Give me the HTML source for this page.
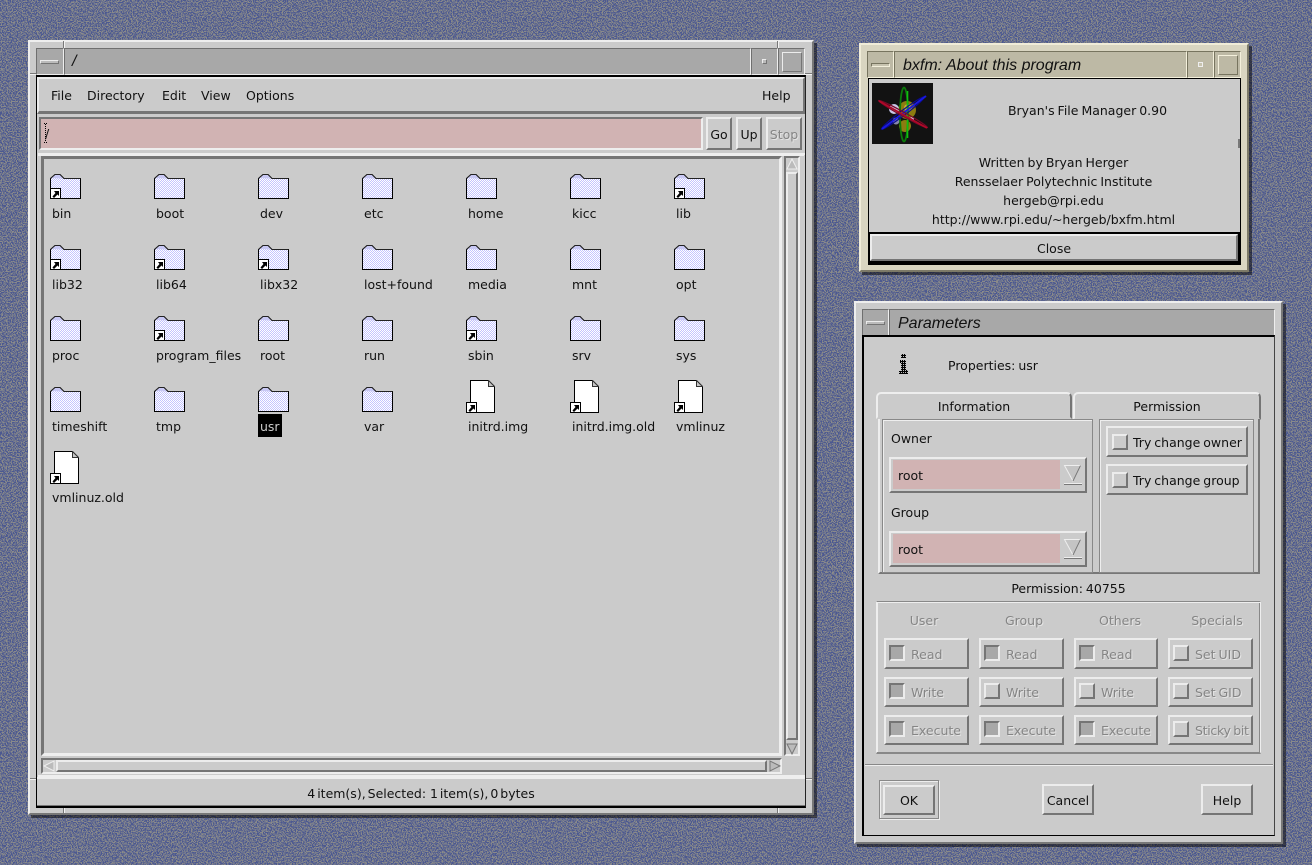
<!DOCTYPE html>
<html><head><meta charset="utf-8"><title>bxfm</title>
<style>
html,body{margin:0;padding:0;width:1312px;height:865px;overflow:hidden;background:#6f7388}
body{position:relative;font:12.5px/16px "DejaVu Sans","Liberation Sans",sans-serif;color:#111;word-spacing:-1px}
div,svg,span.t{position:absolute;box-sizing:border-box}
span.t{white-space:nowrap;margin-top:1px}
.c{text-align:center}
.r{background:#cbcbcb;border:2px solid;border-color:#ececec #757575 #757575 #ececec}
.s{border:2px solid;border-color:#757575 #ececec #ececec #757575}
.wo{background:#cbcbcb;border:2px solid;border-color:#eee #777 #777 #eee;box-shadow:3px 3px 0 rgba(0,0,0,.5)}
.wb{background:#d9d5c1;border:2px solid;border-color:#f0ecd8 #7d7a68 #7d7a68 #f0ecd8;box-shadow:3px 3px 0 rgba(0,0,0,.5)}
.tt{background:#a8a8a8;border:1px solid;border-color:#6f6f6f #eee #eee #6f6f6f}
.tb{background:#bdb9a5;border:1px solid;border-color:#77745f #f4f0dc #f4f0dc #77745f}
.ti{font-family:"Liberation Sans",sans-serif;font-style:italic;font-size:16px;line-height:20px;word-spacing:0}
.k{background:#cbcbcb;border:2px solid;border-color:#ececec #757575 #757575 #ececec;width:16px;height:16px}
.k.n{background:#a8a8a8;border-color:#757575 #ececec #ececec #757575}
.d{color:#858585;text-shadow:1px 1px 0 #e4e4e4}
.l{background:#f2f2f2}
.g{background:#787878}
.sel{background:#000}
</style></head><body>
<svg style="left:0;top:0" width="1312" height="865">
<filter id="nz" x="0" y="0" width="100%" height="100%" color-interpolation-filters="sRGB"><feTurbulence type="fractalNoise" baseFrequency="0.8" numOctaves="2" seed="7"/><feColorMatrix values="0 0 0 0 .30 0 0 0 0 .35 0 0 0 0 .57 1 0 0 0 0"/><feComponentTransfer><feFuncA type="discrete" tableValues="0 0 1 1"/></feComponentTransfer></filter>
<defs>
<pattern id="h" width="2" height="2" patternUnits="userSpaceOnUse"><rect width="2" height="2" fill="#c4c4ff"/><rect width="1" height="1" fill="#fff"/><rect x="1" y="1" width="1" height="1" fill="#fff"/></pattern>
<symbol id="f" viewBox="0 0 31 25"><path d="M.5 4.500 5 .5h5l4 4h16.500v20H.5z" fill="url(#h)" stroke="#000"/><path d="M1 4 5 1h5l3.500 3.500z" fill="#c8c8f4"/><path d="M.5 4.500 5 .5h5l4 4h16.500" fill="none" stroke="#222"/></symbol>
<symbol id="a" viewBox="0 0 11 11"><rect x=".5" y=".5" width="10" height="10" fill="#fff" stroke="#000"/><path d="M4 3h5v5L7.500 6.500 4 10 2.500 8.500l3-3.500z" fill="#000"/></symbol>
<symbol id="p" viewBox="0 0 29 33"><path d="M4.500.5h18l6 6v26h-24z" fill="#fff" stroke="#000"/><path d="M22.500.5v6h6z" fill="#c8c8c8" stroke="#333"/></symbol>
</defs>
<rect width="1312" height="865" fill="#8a8a8a"/>
<rect width="1312" height="865" fill="#4d5a92" filter="url(#nz)"/>
</svg>

<!-- MAIN WINDOW -->
<div class="wo" style="left:28px;top:40px;width:786px;height:775px"></div>
<div class="g" style="left:63px;top:41px;width:1px;height:7px"></div><div class="l" style="left:64px;top:41px;width:1px;height:7px"></div>
<div class="g" style="left:777px;top:41px;width:1px;height:7px"></div><div class="l" style="left:778px;top:41px;width:1px;height:7px"></div>
<div class="g" style="left:30px;top:73px;width:7px;height:1px"></div><div class="l" style="left:30px;top:74px;width:7px;height:1px"></div>
<div class="g" style="left:805px;top:73px;width:7px;height:1px"></div><div class="l" style="left:805px;top:74px;width:7px;height:1px"></div>
<div class="g" style="left:30px;top:778px;width:7px;height:1px"></div><div class="l" style="left:30px;top:779px;width:7px;height:1px"></div>
<div class="g" style="left:805px;top:778px;width:7px;height:1px"></div><div class="l" style="left:805px;top:779px;width:7px;height:1px"></div>
<div class="g" style="left:63px;top:806px;width:1px;height:7px"></div><div class="l" style="left:64px;top:806px;width:1px;height:7px"></div>
<div class="g" style="left:777px;top:806px;width:1px;height:7px"></div><div class="l" style="left:778px;top:806px;width:1px;height:7px"></div>
<div class="tt" style="left:36px;top:48px;width:28px;height:27px"></div>
<div class="k" style="left:40px;top:60px;width:19px;height:4px;border-width:1px;background:#bbb"></div>
<div class="tt" style="left:64px;top:48px;width:687px;height:27px"></div>
<span class="t ti" style="left:72px;top:51px">/</span>
<div class="tt" style="left:751px;top:48px;width:27px;height:27px"></div>
<div class="k" style="left:762px;top:59px;width:5px;height:5px;border-width:1px;background:#bbb"></div>
<div class="tt" style="left:778px;top:48px;width:27px;height:27px"></div>
<div class="k" style="left:782px;top:52px;width:20px;height:20px;border-width:1px;background:#a8a8a8"></div>
<div style="left:36px;top:75px;width:770px;height:733px;border:1px solid;border-color:#000 #222 #000 #000;border-top-width:2px;border-bottom-width:2px;background:#cbcbcb"></div>

<div class="r" style="left:37px;top:77px;width:768px;height:37px;border-bottom-width:3px"></div>
<span class="t" style="left:51px;top:87px">File</span>
<span class="t" style="left:87px;top:87px">Directory</span>
<span class="t" style="left:162px;top:87px">Edit</span>
<span class="t" style="left:201px;top:87px">View</span>
<span class="t" style="left:246px;top:87px">Options</span>
<span class="t" style="left:762px;top:87px">Help</span>

<div class="s" style="left:39px;top:117px;width:664px;height:33px;background:#d1b3b3;border-color:#757575 #eee #eee #757575;border-width:2px"></div>
<span class="t" style="left:45px;top:125px">/</span>
<svg style="left:44px;top:123px" width="3" height="20"><path d="M1.500 1v18" stroke="#000" stroke-dasharray="1 1"/><path d="M0 .5h3M0 19.500h3" stroke="#000" stroke-dasharray="1 1"/></svg>
<div class="r" style="left:706px;top:117px;width:26px;height:33px"></div><span class="t c" style="left:706px;top:126px;width:26px">Go</span>
<div class="r" style="left:736px;top:117px;width:26px;height:33px"></div><span class="t c" style="left:736px;top:126px;width:26px">Up</span>
<div class="r" style="left:766px;top:117px;width:36px;height:33px"></div><span class="t c d" style="left:766px;top:126px;width:36px">Stop</span>

<div style="left:38px;top:153px;width:767px;height:624px;border-top:2px solid #eee;border-bottom:2px solid #eee;background:#cbcbcb"></div>
<div style="left:38px;top:154px;width:766px;height:2px;background:#eee"></div>
<div style="left:41px;top:156px;width:741px;height:600px;border:3px solid;border-color:#757575 #eee #eee #757575"></div>
<!-- v scrollbar -->
<div style="left:784px;top:156px;width:16px;height:600px;border:2px solid;border-color:#757575 #eee #eee #757575"></div>
<svg style="left:786px;top:158px" width="12" height="12"><path d="M6 1 11 11H1z" fill="#bbb" stroke="#eee"/></svg>
<div class="r" style="left:786px;top:172px;width:12px;height:568px"></div>
<svg style="left:786px;top:743px" width="12" height="12"><path d="M6 11 11 1H1z" fill="#bbb" stroke="#777"/></svg>
<!-- h scrollbar -->
<div style="left:41px;top:758px;width:741px;height:16px;border:2px solid;border-color:#757575 #eee #eee #757575"></div>
<svg style="left:43px;top:760px" width="12" height="12"><path d="M1 6 11 1V11z" fill="#bbb" stroke="#eee"/></svg>
<div class="r" style="left:56px;top:760px;width:711px;height:12px"></div>
<svg style="left:769px;top:760px" width="12" height="12"><path d="M11 6 1 1V11z" fill="#bbb" stroke="#777"/></svg>
<div style="left:37px;top:777px;width:768px;height:29px;border-top:2px solid #eee;border-bottom:1px solid #777"></div>
<span class="t c" style="left:37px;top:785px;width:768px;word-spacing:-2px">4 item(s), Selected:&nbsp; 1 item(s), 0 bytes</span>

<!-- Row 1 -->
<svg style="left:50px;top:174px" width="31" height="25"><use href="#f"/></svg><svg style="left:50px;top:188px" width="11" height="11"><use href="#a"/></svg><span class="t" style="left:52px;top:205px">bin</span>
<svg style="left:154px;top:174px" width="31" height="25"><use href="#f"/></svg><span class="t" style="left:156px;top:205px">boot</span>
<svg style="left:258px;top:174px" width="31" height="25"><use href="#f"/></svg><span class="t" style="left:260px;top:205px">dev</span>
<svg style="left:362px;top:174px" width="31" height="25"><use href="#f"/></svg><span class="t" style="left:364px;top:205px">etc</span>
<svg style="left:466px;top:174px" width="31" height="25"><use href="#f"/></svg><span class="t" style="left:468px;top:205px">home</span>
<svg style="left:570px;top:174px" width="31" height="25"><use href="#f"/></svg><span class="t" style="left:572px;top:205px">kicc</span>
<svg style="left:674px;top:174px" width="31" height="25"><use href="#f"/></svg><svg style="left:674px;top:188px" width="11" height="11"><use href="#a"/></svg><span class="t" style="left:676px;top:205px">lib</span>
<!-- Row 2 -->
<svg style="left:50px;top:245px" width="31" height="25"><use href="#f"/></svg><svg style="left:50px;top:259px" width="11" height="11"><use href="#a"/></svg><span class="t" style="left:52px;top:276px">lib32</span>
<svg style="left:154px;top:245px" width="31" height="25"><use href="#f"/></svg><svg style="left:154px;top:259px" width="11" height="11"><use href="#a"/></svg><span class="t" style="left:156px;top:276px">lib64</span>
<svg style="left:258px;top:245px" width="31" height="25"><use href="#f"/></svg><svg style="left:258px;top:259px" width="11" height="11"><use href="#a"/></svg><span class="t" style="left:260px;top:276px">libx32</span>
<svg style="left:362px;top:245px" width="31" height="25"><use href="#f"/></svg><span class="t" style="left:364px;top:276px">lost+found</span>
<svg style="left:466px;top:245px" width="31" height="25"><use href="#f"/></svg><span class="t" style="left:468px;top:276px">media</span>
<svg style="left:570px;top:245px" width="31" height="25"><use href="#f"/></svg><span class="t" style="left:572px;top:276px">mnt</span>
<svg style="left:674px;top:245px" width="31" height="25"><use href="#f"/></svg><span class="t" style="left:676px;top:276px">opt</span>
<!-- Row 3 -->
<svg style="left:50px;top:316px" width="31" height="25"><use href="#f"/></svg><span class="t" style="left:52px;top:347px">proc</span>
<svg style="left:154px;top:316px" width="31" height="25"><use href="#f"/></svg><svg style="left:154px;top:330px" width="11" height="11"><use href="#a"/></svg><span class="t" style="left:156px;top:347px">program_files</span>
<svg style="left:258px;top:316px" width="31" height="25"><use href="#f"/></svg><span class="t" style="left:260px;top:347px">root</span>
<svg style="left:362px;top:316px" width="31" height="25"><use href="#f"/></svg><span class="t" style="left:364px;top:347px">run</span>
<svg style="left:466px;top:316px" width="31" height="25"><use href="#f"/></svg><svg style="left:466px;top:330px" width="11" height="11"><use href="#a"/></svg><span class="t" style="left:468px;top:347px">sbin</span>
<svg style="left:570px;top:316px" width="31" height="25"><use href="#f"/></svg><span class="t" style="left:572px;top:347px">srv</span>
<svg style="left:674px;top:316px" width="31" height="25"><use href="#f"/></svg><span class="t" style="left:676px;top:347px">sys</span>
<!-- Row 4 -->
<svg style="left:50px;top:387px" width="31" height="25"><use href="#f"/></svg><span class="t" style="left:52px;top:418px">timeshift</span>
<svg style="left:154px;top:387px" width="31" height="25"><use href="#f"/></svg><span class="t" style="left:156px;top:418px">tmp</span>
<svg style="left:258px;top:387px" width="31" height="25"><use href="#f"/></svg><div class="sel" style="left:258px;top:414px;width:24px;height:23px"></div><span class="t" style="left:260px;top:418px;color:#ccc">usr</span>
<svg style="left:362px;top:387px" width="31" height="25"><use href="#f"/></svg><span class="t" style="left:364px;top:418px">var</span>
<svg style="left:466px;top:380px" width="29" height="33"><use href="#p"/></svg><svg style="left:466px;top:402px" width="11" height="11"><use href="#a"/></svg><span class="t" style="left:468px;top:418px">initrd.img</span>
<svg style="left:570px;top:380px" width="29" height="33"><use href="#p"/></svg><svg style="left:570px;top:402px" width="11" height="11"><use href="#a"/></svg><span class="t" style="left:572px;top:418px">initrd.img.old</span>
<svg style="left:674px;top:380px" width="29" height="33"><use href="#p"/></svg><svg style="left:674px;top:402px" width="11" height="11"><use href="#a"/></svg><span class="t" style="left:676px;top:418px">vmlinuz</span>
<!-- Row 5 -->
<svg style="left:50px;top:451px" width="29" height="33"><use href="#p"/></svg><svg style="left:50px;top:473px" width="11" height="11"><use href="#a"/></svg><span class="t" style="left:52px;top:489px">vmlinuz.old</span>

<!-- ABOUT WINDOW -->
<div class="wb" style="left:859px;top:43px;width:390px;height:229px"></div>
<div class="tb" style="left:867px;top:51px;width:27px;height:27px"></div>
<div style="left:871px;top:63px;width:19px;height:4px;background:#c8c4b0;border:1px solid;border-color:#77745f #f4f0dc #f4f0dc #77745f"></div>
<div class="tb" style="left:894px;top:51px;width:293px;height:27px"></div>
<span class="t ti" style="left:903px;top:55px">bxfm: About this program</span>
<div class="tb" style="left:1187px;top:51px;width:27px;height:27px"></div>
<div style="left:1198px;top:62px;width:5px;height:5px;background:#c8c4b0;border:1px solid #eee"></div>
<div class="tb" style="left:1214px;top:51px;width:27px;height:27px"></div>
<div style="left:1218px;top:55px;width:20px;height:20px;background:#bdb9a5;border:1px solid;border-color:#f4f0dc #77745f #77745f #f4f0dc"></div>
<div style="left:868px;top:78px;width:373px;height:187px;border:1px solid #000;background:#cbcbcb"></div>
<svg style="left:872px;top:83px" width="61" height="61" viewBox="0 0 61 61">
<rect width="61" height="61" fill="#121212"/>
<circle cx="35" cy="27" r="9" fill="#8c7c10"/><circle cx="33" cy="43" r="6" fill="#8c7c10"/><circle cx="36" cy="25" r="4" fill="#c4b030"/>
<circle cx="22" cy="26" r="5" fill="#c8c8e8"/><circle cx="24" cy="38" r="3.500" fill="#8888aa"/><circle cx="40" cy="36" r="2" fill="#c8c8e8"/>
<ellipse cx="32" cy="31.500" rx="4" ry="27" fill="none" stroke="#0a7a0a" stroke-width="1.800"/>
<path d="M35.500 8V55" stroke="#10c010" stroke-width="1.600"/>
<ellipse cx="31" cy="30" rx="27" ry="2.500" transform="rotate(-37 31 30)" fill="none" stroke="#0a0a90" stroke-width="1.200"/>
<path d="M10 46 54 13" stroke="#1818e0" stroke-width="2"/>
<ellipse cx="31" cy="31" rx="28" ry="2" transform="rotate(29 31 31)" fill="none" stroke="#7a0828" stroke-width="1.200"/>
<path d="M7 18 55 45" stroke="#b00828" stroke-width="1.800"/>
</svg>
<div class="g" style="left:1238px;top:139px;width:2px;height:9px"></div>
<span class="t c" style="left:948px;top:102px;width:279px">Bryan's File Manager 0.90</span>
<span class="t c" style="left:868px;top:154px;width:371px">Written by Bryan Herger</span>
<span class="t c" style="left:868px;top:173px;width:371px">Rensselaer Polytechnic Institute</span>
<span class="t c" style="left:868px;top:192px;width:371px">hergeb@rpi.edu</span>
<span class="t c" style="left:868px;top:211px;width:371px">http://www.rpi.edu/~hergeb/bxfm.html</span>
<div style="left:868px;top:232px;width:373px;height:33px;background:#000"></div>
<div class="r" style="left:870px;top:234px;width:368px;height:27px"></div>
<span class="t c" style="left:870px;top:240px;width:368px">Close</span>

<!-- PARAMETERS WINDOW -->
<div class="wo" style="left:854px;top:301px;width:429px;height:543px"></div>
<div class="tt" style="left:862px;top:309px;width:27px;height:27px"></div>
<div class="k" style="left:866px;top:321px;width:19px;height:4px;border-width:1px;background:#bbb"></div>
<div class="tt" style="left:889px;top:309px;width:386px;height:27px"></div>
<span class="t ti" style="left:898px;top:313px">Parameters</span>
<div style="left:862px;top:335px;width:413px;height:501px;border:1px solid #000;border-top-width:2px;border-left-width:2px;background:#cbcbcb;border-right-color:#444"></div>
<svg style="left:899px;top:354px" width="10" height="21"><defs><pattern id="ck" width="2" height="2" patternUnits="userSpaceOnUse"><rect width="2" height="2" fill="#000"/><rect width="1" height="1" fill="#bbb"/></pattern></defs><path d="M2 0h5v4H2zM1 6h6v10h2v4H0v-3h2V9H1z" fill="url(#ck)"/></svg>
<span class="t" style="left:948px;top:357px">Properties: usr</span>

<!-- Tabs -->
<div style="left:876px;top:392px;width:196px;height:27px;border:2px solid;border-color:#eee #757575 transparent #eee;border-radius:5px 5px 0 0"></div>
<span class="t c" style="left:876px;top:398px;width:196px">Information</span>
<div style="left:1073px;top:392px;width:188px;height:28px;border:2px solid;border-color:#eee #757575 transparent #eee;border-radius:5px 5px 0 0"></div>
<span class="t c" style="left:1073px;top:398px;width:188px">Permission</span>

<div style="left:878px;top:419px;width:382px;height:155px;border-left:2px solid #eee;border-bottom:2px solid #777;border-right:2px solid #777"></div>
<div style="left:882px;top:419px;width:211px;height:154px;border:1px solid #888;box-shadow:inset 1px 1px 0 #eee"></div>
<div style="left:1099px;top:419px;width:155px;height:154px;border:1px solid #888;box-shadow:inset 1px 1px 0 #eee"></div>

<span class="t" style="left:891px;top:430px">Owner</span>
<div class="r" style="left:889px;top:457px;width:198px;height:36px"></div>
<div style="left:893px;top:460px;width:167px;height:29px;background:#d1b3b3"></div>
<span class="t" style="left:898px;top:467px">root</span>
<svg style="left:1063px;top:464px" width="20" height="22"><path d="M1.500 1.500h16L10 17z" fill="#c4c4c4" stroke="#eee"/><path d="M17.500 1.500 10 17" stroke="#777" fill="none"/><path d="M1 19.500h18" stroke="#eee"/><path d="M1 20.500h18" stroke="#777"/></svg>
<span class="t" style="left:891px;top:504px">Group</span>
<div class="r" style="left:889px;top:531px;width:198px;height:36px"></div>
<div style="left:893px;top:534px;width:167px;height:29px;background:#d1b3b3"></div>
<span class="t" style="left:898px;top:541px">root</span>
<svg style="left:1063px;top:538px" width="20" height="22"><path d="M1.500 1.500h16L10 17z" fill="#c4c4c4" stroke="#eee"/><path d="M17.500 1.500 10 17" stroke="#777" fill="none"/><path d="M1 19.500h18" stroke="#eee"/><path d="M1 20.500h18" stroke="#777"/></svg>

<div class="r" style="left:1106px;top:426px;width:142px;height:31px"></div><div class="k" style="left:1112px;top:434px"></div><span class="t" style="left:1133px;top:434px">Try change owner</span>
<div class="r" style="left:1106px;top:464px;width:142px;height:31px"></div><div class="k" style="left:1112px;top:472px"></div><span class="t" style="left:1133px;top:472px">Try change group</span>

<span class="t c" style="left:876px;top:580px;width:385px">Permission: 40755</span>

<div style="left:876px;top:601px;width:385px;height:153px;border:1px solid #888;border-color:#888 #eee #888 #eee;border-bottom-width:2px;box-shadow:inset 1px 1px 0 #eee,inset -1px 0 0 #888"></div>
<span class="t c d" style="left:884px;top:612px;width:80px">User</span>
<span class="t c d" style="left:984px;top:612px;width:80px">Group</span>
<span class="t c d" style="left:1080px;top:612px;width:80px">Others</span>
<span class="t c d" style="left:1177px;top:612px;width:80px">Specials</span>

<div class="r" style="left:884px;top:638px;width:85px;height:31px"></div><div class="k n" style="left:889px;top:645px"></div><span class="t d" style="left:911px;top:646px">Read</span>
<div class="r" style="left:979px;top:638px;width:85px;height:31px"></div><div class="k n" style="left:984px;top:645px"></div><span class="t d" style="left:1006px;top:646px">Read</span>
<div class="r" style="left:1074px;top:638px;width:84px;height:31px"></div><div class="k n" style="left:1079px;top:645px"></div><span class="t d" style="left:1101px;top:646px">Read</span>
<div class="r" style="left:1168px;top:638px;width:85px;height:31px"></div><div class="k" style="left:1173px;top:645px"></div><span class="t d" style="left:1195px;top:646px">Set UID</span>

<div class="r" style="left:884px;top:677px;width:85px;height:30px"></div><div class="k n" style="left:889px;top:683px"></div><span class="t d" style="left:911px;top:684px">Write</span>
<div class="r" style="left:979px;top:677px;width:85px;height:30px"></div><div class="k" style="left:984px;top:683px"></div><span class="t d" style="left:1006px;top:684px">Write</span>
<div class="r" style="left:1074px;top:677px;width:84px;height:30px"></div><div class="k" style="left:1079px;top:683px"></div><span class="t d" style="left:1101px;top:684px">Write</span>
<div class="r" style="left:1168px;top:677px;width:85px;height:30px"></div><div class="k" style="left:1173px;top:683px"></div><span class="t d" style="left:1195px;top:684px">Set GID</span>

<div class="r" style="left:884px;top:715px;width:85px;height:30px"></div><div class="k n" style="left:889px;top:721px"></div><span class="t d" style="left:911px;top:722px">Execute</span>
<div class="r" style="left:979px;top:715px;width:85px;height:30px"></div><div class="k n" style="left:984px;top:721px"></div><span class="t d" style="left:1006px;top:722px">Execute</span>
<div class="r" style="left:1074px;top:715px;width:84px;height:30px"></div><div class="k n" style="left:1079px;top:721px"></div><span class="t d" style="left:1101px;top:722px">Execute</span>
<div class="r" style="left:1168px;top:715px;width:85px;height:30px"></div><div class="k" style="left:1173px;top:721px"></div><span class="t d" style="left:1195px;top:722px;letter-spacing:-.3px">Sticky bit</span>

<div style="left:865px;top:764px;width:408px;height:2px;border-top:1px solid #888;border-bottom:1px solid #eee"></div>
<div style="left:879px;top:780px;width:60px;height:39px;border:1px solid #888;box-shadow:inset 1px 1px 0 #eee,1px 1px 0 #eee"></div>
<div class="r" style="left:883px;top:785px;width:52px;height:30px"></div><span class="t c" style="left:883px;top:792px;width:52px">OK</span>
<div class="r" style="left:1042px;top:784px;width:52px;height:31px"></div><span class="t c" style="left:1042px;top:792px;width:52px">Cancel</span>
<div class="r" style="left:1201px;top:784px;width:52px;height:31px"></div><span class="t c" style="left:1201px;top:792px;width:52px">Help</span>
</body></html>
